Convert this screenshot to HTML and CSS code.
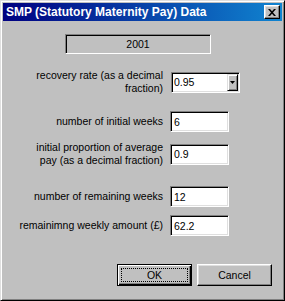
FILE: index.html
```html
<!DOCTYPE html>
<html>
<head>
<meta charset="utf-8">
<link rel="stylesheet" href="styles.css">
</head>
<body>
<div class="window">
  <div class="titlebar">
    <span class="title">SMP (Statutory Maternity Pay) Data</span>
    <span class="close">
      <svg width="8" height="7" viewBox="0 0 8 7"><path d="M0 0h2l2 2.2L6 0h2L5 3.5 8 7H6L4 4.8 2 7H0l3-3.5z" fill="#000"/></svg>
    </span>
  </div>
  <div class="body">
    <div class="year">2001</div>
    <div class="row r1">
      <div class="label">recovery rate (as a decimal<br>fraction)</div>
      <div class="combo"><span class="val">0.95</span><span class="drop"><svg width="5" height="3" viewBox="0 0 5 3"><path d="M0 0h5L2.5 3z" fill="#000"/></svg></span></div>
    </div>
    <div class="row r2">
      <div class="label">number of initial weeks</div>
      <div class="edit">6</div>
    </div>
    <div class="row r3">
      <div class="label">initial proportion of average<br>pay (as a decimal fraction)</div>
      <div class="edit">0.9</div>
    </div>
    <div class="row r4">
      <div class="label">number of remaining weeks</div>
      <div class="edit">12</div>
    </div>
    <div class="row r5">
      <div class="label">remainimng weekly amount (£)</div>
      <div class="edit">62.2</div>
    </div>
    <div class="buttons">
      <div class="btn default"><span class="focus">OK</span></div>
      <div class="btn">Cancel</div>
    </div>
  </div>
</div>
</body>
</html>
```
FILE: styles.css
```css
html, body {
  margin: 0;
  padding: 0;
  background: #c0c0c0;
}
.window {
  width: 285px;
  height: 301px;
  box-sizing: border-box;
  background: #c0c0c0;
  border: 1px solid;
  border-color: #dfdfdf #000 #000 #dfdfdf;
  box-shadow: inset 1px 1px #fff, inset -1px -1px #808080;
  padding: 2px;
  font-family: "Liberation Sans", Arial, sans-serif;
  font-size: 10.5px;
  color: #000;
}
.titlebar {
  height: 18px;
  display: flex;
  align-items: center;
  justify-content: space-between;
  padding: 0 2px 0 3px;
  background: linear-gradient(90deg, #000080, #1084d0);
}
.title {
  color: #fff;
  font-weight: bold;
  font-size: 12px;
  white-space: nowrap;
}
.close {
  width: 16px;
  height: 14px;
  box-sizing: border-box;
  background: #c0c0c0;
  border: 1px solid;
  border-color: #fff #000 #000 #fff;
  box-shadow: inset -1px -1px #808080, inset 1px 1px #dfdfdf;
  display: flex;
  align-items: center;
  justify-content: center;
  padding-right: 1px;
}
.close svg { display: block; }
.body {
  display: flex;
  flex-direction: column;
}
.year {
  margin: 13px 0 0 62px;
  width: 146px;
  height: 20px;
  box-sizing: border-box;
  border: 1px solid;
  border-color: #808080 #fff #fff #808080;
  box-shadow: inset 1px 1px #000;
  display: flex;
  align-items: center;
  justify-content: center;
}
.row {
  display: flex;
  align-items: center;
}
.r1 { margin-top: 15px; height: 26px; }
.r2 { margin-top: 16px; height: 21px; }
.r3 { margin-top: 9px; height: 26px; }
.r4 { margin-top: 19px; height: 21px; }
.r5 { margin-top: 8px; height: 21px; }
.label {
  width: 160px;
  text-align: right;
  line-height: 13px;
  white-space: nowrap;
  margin-right: 7px;
}
.edit, .combo {
  height: 21px;
  box-sizing: border-box;
  background: #fff;
  border: 1px solid;
  border-color: #808080 #fff #fff #808080;
  box-shadow: inset 1px 1px #000, inset -1px -1px #dfdfdf;
  display: flex;
  align-items: center;
}
.edit {
  width: 59px;
  padding-left: 3px;
}
.combo {
  width: 69px;
  margin-left: 1px;
  padding: 1px 1px 1px 2px;
  justify-content: space-between;
}
.drop {
  width: 11px;
  height: 17px;
  box-sizing: border-box;
  background: #c0c0c0;
  border: 1px solid;
  border-color: #dfdfdf #000 #000 #dfdfdf;
  box-shadow: inset 1px 1px #fff, inset -1px -1px #808080;
  display: flex;
  align-items: center;
  justify-content: center;
}
.drop svg { display: block; }
.buttons {
  margin-top: 28px;
  display: flex;
  justify-content: flex-end;
  gap: 5px;
  padding-right: 10px;
}
.btn {
  width: 75px;
  height: 22px;
  box-sizing: border-box;
  border: 1px solid;
  border-color: #fff #000 #000 #fff;
  box-shadow: inset -1px -1px #808080, inset 1px 1px #dfdfdf;
  display: flex;
  align-items: center;
  justify-content: center;
}
.btn.default {
  border-color: #000;
  box-shadow: inset 1px 1px #fff, inset -1px -1px #000, inset -2px -2px #808080;
  padding: 3px;
}
.focus {
  flex: 1;
  align-self: stretch;
  border: 1px dotted #000;
  display: flex;
  align-items: center;
  justify-content: center;
}
```
